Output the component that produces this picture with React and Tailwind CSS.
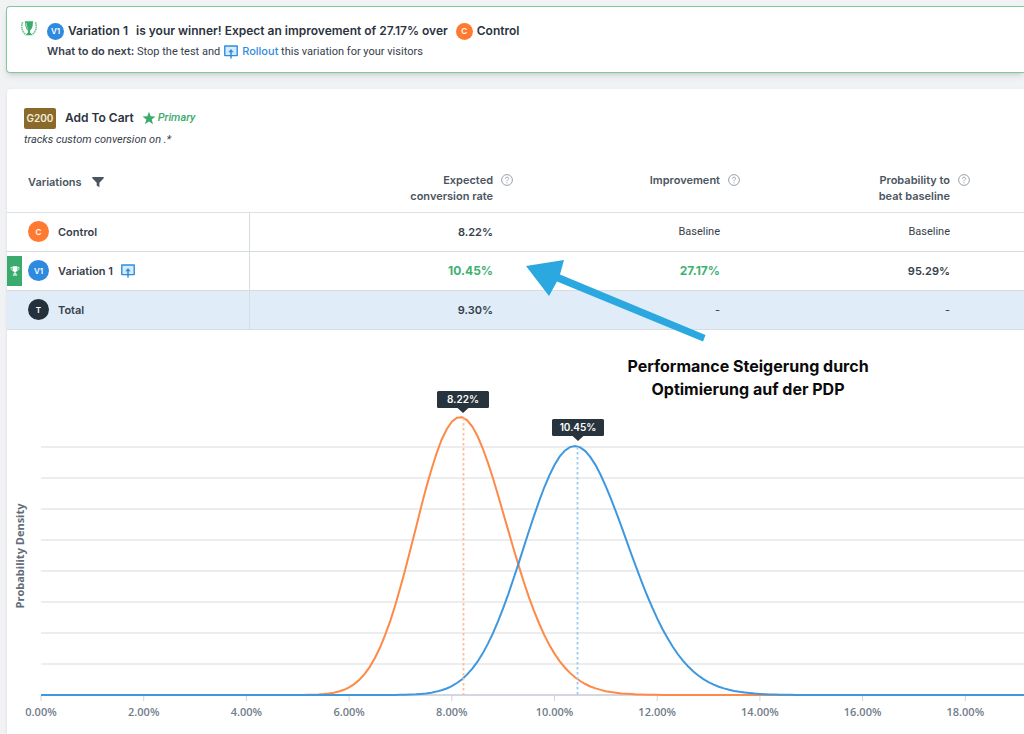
import React from "react";

const AXIS_Y = 365;
const ORIGIN_X = 34;
const PX_PER_PERCENT = 51.35;
const GRID = [117, 148, 179, 210, 241, 272, 303, 334];
const TICKS = [0, 2, 4, 6, 8, 10, 12, 14, 16, 18];

// Beta density scaled so that its mode reaches the given height.
function densityPath(mean, samples, height) {
  const a = (mean / 100) * samples;
  const b = samples - a;
  const mode = (a - 1) / (a + b - 2);
  const log = (x) => (a - 1) * Math.log(x) + (b - 1) * Math.log(1 - x);
  const top = log(mode);
  const points = [`M${ORIGIN_X} ${AXIS_Y}`];
  for (let p = 0.1; p <= 40; p += 0.1) {
    const y = AXIS_Y - height * Math.exp(log(p / 100) - top);
    points.push(`L${(ORIGIN_X + p * PX_PER_PERCENT).toFixed(1)} ${y.toFixed(1)}`);
  }
  return points.join(" ");
}

function Trophy({ className }) {
  return (
    <svg viewBox="0 0 16 16" className={className} fill="currentColor" aria-hidden="true">
      <path d="M4.2 0.5h7.6v4.2c0 2.6-1.3 4.3-3 4.8v2.2c1.6.2 2.4.9 2.4 1.9H4.8c0-1 .8-1.7 2.4-1.9V9.5c-1.7-.5-3-2.2-3-4.8z" />
      <path d="M4.5 14h7v1.3h-7z" />
      <path d="M4.4 2.3H1.5c0 3 1.2 5 3.7 5.5M11.6 2.3h2.9c0 3-1.2 5-3.7 5.5" fill="none" stroke="currentColor" strokeWidth="1.2" />
    </svg>
  );
}

function WreathTrophy() {
  return (
    <svg viewBox="0 0 16 16" className="mt-0.5 size-4 text-[#3aab6d]" fill="currentColor" aria-hidden="true">
      <path d="M3.8 0.3h8.4l-.3 1.2c0 4.2-1 6.7-2.8 7.8v2.4l1.8 1.5v1H5.1v-1l1.8-1.5V9.3C5.1 8.2 4.1 5.7 4.1 1.5z" />
      <path d="M5.3 2c.1 3 .6 4.8 1.5 5.8" fill="none" stroke="#bce5cd" strokeWidth=".8" />
      <path d="M1.6 1.2C-.1 5.5.6 10.5 5.3 14M14.4 1.2c1.7 4.3 1 9.3-3.7 12.8" fill="none" stroke="#6cc293" strokeWidth="1.7" strokeDasharray="1.6 .7" />
    </svg>
  );
}

function RolloutIcon() {
  return (
    <svg viewBox="0 0 14 14" className="h-3.5 w-3.5 shrink-0" fill="none" stroke="#2f8de0" strokeWidth="1.4" aria-hidden="true">
      <path d="M.8 1h12.4v9.6H.8z" fill="#d8eafb" strokeLinejoin="round" />
      <path d="M7 13.6V5" strokeWidth="1.5" />
      <path d="M4.3 7.2L7 4l2.7 3.2z" fill="#2f8de0" stroke="none" />
    </svg>
  );
}

function Badge({ children, className }) {
  return (
    <span className={`inline-flex shrink-0 items-center justify-center rounded-full font-semibold text-white ${className}`}>
      {children}
    </span>
  );
}

function HelpButton({ label }) {
  return (
    <button type="button" aria-label={label} className="mt-0.5 block size-3">
      <svg viewBox="0 0 12 12" className="size-3" fill="none" stroke="#99a1ad" aria-hidden="true">
        <circle cx="6" cy="6" r="5.4" strokeWidth="1" />
        <path d="M4.4 4.7c0-2 3.2-2 3.2-.1C7.6 5.8 6 5.8 6 7.2M6 8.3v1" strokeWidth="1" />
      </svg>
    </button>
  );
}

function HeadCell({ lines, help }) {
  return (
    <th scope="col" className="p-0 pr-2 align-top font-semibold">
      <div className="flex items-start justify-end gap-2 pt-1">
        <span className="text-right">
          {lines.map((line) => (
            <span key={line} className="block">{line}</span>
          ))}
        </span>
        <HelpButton label={help} />
      </div>
    </th>
  );
}

function Row({ badge, badgeClass, name, winner, cells, className }) {
  return (
    <tr className={`h-[39px] border-b border-[#d6dde0] ${className}`}>
      <th scope="row" className="border-r border-[#d6dde0] p-0 text-left font-semibold">
        <div className="flex items-center">
          <span className={`flex h-[30px] w-[15px] items-center justify-center text-white ${winner ? "bg-[#3aab6d]" : ""}`}>
            {winner && <Trophy className="size-2.5" />}
          </span>
          <Badge className={`ml-1.5 size-[21px] text-[8px] ${badgeClass}`}>{badge}</Badge>
          <span className="ml-[9px] mr-2">{name}</span>
          {winner && <button type="button" aria-label="Rollout"><RolloutIcon /></button>}
        </div>
      </th>
      {cells.map(([text, tone], i) => (
        <td key={i} className={`p-0 pr-7 text-right ${tone}`}>{text}</td>
      ))}
      <td />
    </tr>
  );
}

function Tip({ x, y, text }) {
  return (
    <g>
      <rect x={x - 26} y={y} width="52" height="17" rx="1.5" fill="#27343d" />
      <path d={`M${x - 6} ${y + 16.5}h12l-6 5.5z`} fill="#27343d" />
      <text x={x} y={y + 12} textAnchor="middle" fontSize="10" fontWeight="600" fill="#fff">{text}</text>
    </g>
  );
}

function Chart() {
  return (
    <svg className="block h-[404px] w-full" role="img" aria-label="Probability density of conversion rates" fill="none">
      {GRID.map((y) => (
        <line key={y} x1={ORIGIN_X} x2="100%" y1={y} y2={y} stroke="#ebedef" strokeWidth="2" />
      ))}
      <line x1={ORIGIN_X} x2="100%" y1={AXIS_Y} y2={AXIS_Y} stroke="#c3cad6" strokeWidth="1.5" />
      {TICKS.map((t) => {
        const x = ORIGIN_X + t * PX_PER_PERCENT;
        return (
          <g key={t}>
            <line x1={x} x2={x} y1={AXIS_Y} y2={AXIS_Y + 6} stroke="#cfd4dd" />
            <text x={x} y="386" textAnchor="middle" fontSize="11" fontWeight="600" fill="#727c8a" className="font-['Open_Sans',sans-serif]">{t.toFixed(2)}%</text>
          </g>
        );
      })}
      <text transform="translate(17 226) rotate(-90)" textAnchor="middle" fontSize="11" fontWeight="700" fill="#626d78" className="font-['Open_Sans',sans-serif]">
        Probability Density
      </text>
      <path d={densityPath(8.25, 960, 278)} stroke="#ff8947" strokeWidth="2" />
      <path d={densityPath(10.48, 930, 249)} stroke="#3f98df" strokeWidth="2" />
      <path d="M456.5 88V365" stroke="#ffbd98" strokeWidth="1.8" strokeDasharray="2.5 2.5" />
      <path d="M570.5 117V365" stroke="#9bcbf2" strokeWidth="1.8" strokeDasharray="2.5 2.5" />
      <Tip x={456} y={61} text="8.22%" />
      <Tip x={571} y={89} text="10.45%" />
    </svg>
  );
}

export default function App() {
  return (
    <main className="min-h-screen overflow-x-hidden bg-[#f1f2f4] pl-1.5 pt-1.5 font-['Inter',sans-serif] text-[11px] leading-4 text-[#36404b]">
      <section className="flex gap-2.5 rounded-l border border-r-0 border-[#7fc8a0] bg-white py-3 pl-3.5 shadow-md">
        <WreathTrophy />
        <div>
          <h1 className="flex h-6 items-center text-xs font-semibold text-[#2c333f]">
            <Badge className="mr-1 size-[17px] bg-[#2e8ade] text-[8px]">V1</Badge>
            <span className="mr-2">Variation 1</span>
            <span className="mr-2">is your winner! Expect an improvement of 27.17% over</span>
            <Badge className="mr-1 size-[17px] bg-[#ff7a31] text-[8px]">C</Badge>
            <span>Control</span>
          </h1>
          <p className="flex items-center gap-1 font-['Roboto',sans-serif]">
            <span><strong className="font-['Inter',sans-serif] font-semibold">What to do next:</strong> Stop the test and</span>
            <RolloutIcon />
            <span><a href="#rollout" className="font-['Inter',sans-serif] font-medium text-[#2f8de0]">Rollout</a> this variation for your visitors</span>
          </p>
        </div>
      </section>

      <section className="relative ml-px mt-4 rounded-tl bg-white shadow-sm">
        <header className="pl-[17px] pt-[17px]">
          <div className="flex h-6 items-center">
            <span className="flex h-[21px] w-8 items-center justify-center rounded-[2px] bg-[#896a2a] text-[10px] font-semibold text-[#f5edda]">G200</span>
            <h2 className="ml-[9px] text-xs font-semibold text-[#2c333f]">Add To Cart</h2>
            <svg viewBox="0 0 14 14" className="ml-2 size-3.5" fill="#3aab6d" aria-hidden="true">
              <path d="M7 .8l1.7 4.5 4.8.2-3.8 3 1.3 4.7-4-2.7-4 2.7 1.3-4.7-3.8-3 4.8-.2z" />
            </svg>
            <span className="ml-0.5 font-['Roboto',sans-serif] font-medium italic text-[#3aab6d]">Primary</span>
          </div>
          <p className="mt-0.5 font-['Roboto',sans-serif] italic">tracks custom conversion on .*</p>
        </header>

        <table className="mt-5 w-full table-fixed border-collapse">
          <colgroup>
            <col className="w-[242px]" />
            <col className="w-[272px]" />
            <col className="w-[227px]" />
            <col className="w-[230px]" />
            <col />
          </colgroup>
          <thead>
            <tr className="h-11 border-b border-[#dde2e6] text-[#4a5560]">
              <th scope="col" className="p-0 pl-[21px] pt-1.5 text-left align-top font-semibold">
                <div className="flex items-center gap-2.5">
                  Variations
                  <button type="button" aria-label="Filter variations">
                    <svg viewBox="0 0 12 12" className="size-3" fill="currentColor" aria-hidden="true">
                      <path d="M.3 1h11.4v1.2L7.4 6.8v4.4L4.7 9.5V6.8L.3 2.2z" />
                    </svg>
                  </button>
                </div>
              </th>
              <HeadCell lines={["Expected", "conversion rate"]} help="About expected conversion rate" />
              <HeadCell lines={["Improvement"]} help="About improvement" />
              <HeadCell lines={["Probability to", "beat baseline"]} help="About probability to beat baseline" />
              <td />
            </tr>
          </thead>
          <tbody>
            <Row badge="C" badgeClass="bg-[#ff7a31]" name="Control" className="" cells={[["8.22%", "font-semibold"], ["Baseline", "font-['Roboto',sans-serif]"], ["Baseline", "font-['Roboto',sans-serif]"]]} />
            <Row badge="V1" badgeClass="bg-[#2e8ade]" name="Variation 1" winner className="" cells={[["10.45%", "text-xs font-bold text-[#3fb171]"], ["27.17%", "text-xs font-bold text-[#3fb171]"], ["95.29%", "font-semibold"]]} />
            <Row badge="T" badgeClass="bg-[#24313a]" name="Total" className="bg-[#e0edf9]" cells={[["9.30%", "font-semibold"], ["-", ""], ["-", ""]]} />
          </tbody>
        </table>

        <Chart />

        <svg className="pointer-events-none absolute left-[519px] top-[171px] h-[82px] w-[180px]" viewBox="0 0 180 82" aria-hidden="true">
          <path d="M0 6L38 0 34 14.5 179.5 75 177 81.5 31 21.5 23 36z" fill="#2ba8e0" />
        </svg>
        <p className="absolute left-[611px] top-[266px] w-[260px] text-center text-base font-bold leading-[23px] text-[#0b0b0b]">
          Performance Steigerung durch Optimierung auf der PDP
        </p>
      </section>
    </main>
  );
}
